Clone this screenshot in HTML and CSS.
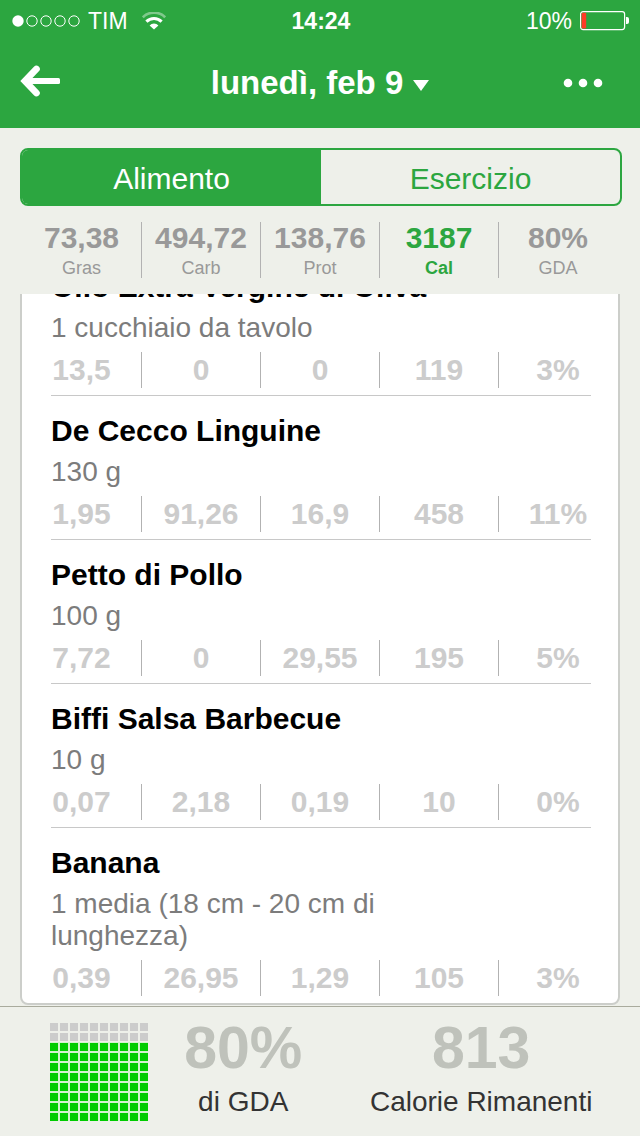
FILE: index.html
```
<!DOCTYPE html>
<html lang="it">
<head>
<meta charset="utf-8">
<meta name="viewport" content="width=device-width, initial-scale=1">
<title>Diario alimentare</title>
<link rel="stylesheet" href="styles.css">
</head>
<body>

<header class="top">
	<div class="status">
		<div class="carrier">
			<svg class="signal" width="68" height="12" viewBox="0 0 68 12">
				<circle cx="6" cy="6" r="5.7" fill="#fff"/>
				<g fill="none" stroke="#fff" stroke-width="1">
					<circle cx="20" cy="6" r="5.2"/>
					<circle cx="34" cy="6" r="5.2"/>
					<circle cx="48" cy="6" r="5.2"/>
					<circle cx="62" cy="6" r="5.2"/>
				</g>
			</svg>
			<span>TIM</span>
			<svg class="wifi" width="24" height="18" viewBox="0 0 24 18">
				<path d="M0.8 5.2 A16 16 0 0 1 23.2 5.2" fill="none" stroke="#fff" stroke-opacity=".4" stroke-width="2.6"/>
				<path d="M4.4 9.6 A10.6 10.6 0 0 1 19.6 9.6" fill="none" stroke="#fff" stroke-width="3"/>
				<path d="M12 17.6 L7.6 13.5 A6 6 0 0 1 16.4 13.5 Z" fill="#fff"/>
			</svg>
		</div>
		<b class="clock">14:24</b>
		<div class="power">
			<span>10%</span>
			<svg width="50" height="20" viewBox="0 0 50 20">
				<rect x="0.6" y="0.6" width="44" height="18" rx="2.5" fill="none" stroke="#fff" stroke-width="1.2"/>
				<rect x="1.6" y="1.8" width="4.6" height="15.6" rx="1" fill="#ff3b26"/>
				<path d="M46 6 h1 a2 2 0 0 1 2 2 v3 a2 2 0 0 1 -2 2 h-1 z" fill="#fff"/>
			</svg>
		</div>
	</div>
	<nav class="nav">
		<button class="back" type="button" aria-label="Indietro">
			<svg width="40" height="32" viewBox="0 0 40 32">
				<path d="M5 16 H38" fill="none" stroke="#fff" stroke-width="6"/>
				<path d="M36 13 h2.5 a1.5 1.5 0 0 1 1.5 1.5 v3 a1.5 1.5 0 0 1 -1.5 1.5 h-2.5 z" fill="#fff"/>
				<path d="M16.4 4 L5 16 L16.4 28" fill="none" stroke="#fff" stroke-width="6.8" stroke-linecap="round"/>
			</svg>
		</button>
		<button class="date" type="button">
			<span>lunedì, feb 9</span>
			<svg width="16" height="11" viewBox="0 0 16 11"><path d="M0 0 H16 L8 11 Z" fill="#fff"/></svg>
		</button>
		<button class="more" type="button" aria-label="Altro">
			<svg width="40" height="10" viewBox="0 0 40 10">
				<circle cx="5" cy="5" r="4.3" fill="#fff"/>
				<circle cx="20" cy="5" r="4.3" fill="#fff"/>
				<circle cx="35" cy="5" r="4.3" fill="#fff"/>
			</svg>
		</button>
	</nav>
</header>

<div class="tabs">
	<button class="tab active" type="button">Alimento</button>
	<button class="tab" type="button">Esercizio</button>
</div>

<div class="totals">
	<div class="total"><b>73,38</b><span>Gras</span></div>
	<div class="total"><b>494,72</b><span>Carb</span></div>
	<div class="total"><b>138,76</b><span>Prot</span></div>
	<div class="total selected"><b>3187</b><span>Cal</span></div>
	<div class="total"><b>80%</b><span>GDA</span></div>
</div>

<main class="diary">
	<ul class="card">
		<li class="food">
			<h2>Olio Extra Vergine di Oliva</h2>
			<p>1 cucchiaio da tavolo</p>
			<div class="amounts"><span>13,5</span><span>0</span><span>0</span><span>119</span><span>3%</span></div>
		</li>
		<li class="food">
			<h2>De Cecco Linguine</h2>
			<p>130 g</p>
			<div class="amounts"><span>1,95</span><span>91,26</span><span>16,9</span><span>458</span><span>11%</span></div>
		</li>
		<li class="food">
			<h2>Petto di Pollo</h2>
			<p>100 g</p>
			<div class="amounts"><span>7,72</span><span>0</span><span>29,55</span><span>195</span><span>5%</span></div>
		</li>
		<li class="food">
			<h2>Biffi Salsa Barbecue</h2>
			<p>10 g</p>
			<div class="amounts"><span>0,07</span><span>2,18</span><span>0,19</span><span>10</span><span>0%</span></div>
		</li>
		<li class="food">
			<h2>Banana</h2>
			<p>1 media (18 cm - 20 cm di lunghezza)</p>
			<div class="amounts"><span>0,39</span><span>26,95</span><span>1,29</span><span>105</span><span>3%</span></div>
		</li>
	</ul>
</main>

<footer class="summary">
	<!-- 10x10 squares, two rows still empty -->
	<svg width="98" height="98" viewBox="0 0 98 98">
		<defs>
			<pattern id="empty" width="10" height="10" patternUnits="userSpaceOnUse"><rect width="8" height="8" fill="#ccc"/></pattern>
			<pattern id="full" width="10" height="10" patternUnits="userSpaceOnUse"><rect width="8" height="8" fill="#00cc00"/></pattern>
		</defs>
		<rect width="98" height="18" fill="url(#empty)"/>
		<rect y="19" width="98" height="79" fill="#d3f3cf"/>
		<rect y="20" width="98" height="78" fill="url(#full)"/>
	</svg>
	<div class="figure"><b>80%</b><span>di GDA</span></div>
	<div class="figure"><b>813</b><span>Calorie Rimanenti</span></div>
</footer>

</body>
</html>
```
FILE: styles.css
```
* {
	box-sizing: border-box;
}
body {
	margin: 0;
	height: 100vh;
	display: flex;
	flex-direction: column;
	background: #eef0ea;
	font-family: "Liberation Sans", Arial, sans-serif;
	color: #333;
}
button {
	border: none;
	background: none;
	padding: 0;
	margin: 0;
	font-family: inherit;
	cursor: pointer;
}
svg {
	display: block;
}

/* green bar */
.top {
	background: #2ca640;
	color: white;
}
.status {
	display: grid;
	grid-template-columns: 1fr auto 1fr;
	align-items: center;
	height: 42px;
	padding: 0 10px 0 12px;
	font-size: 23px;
}
.carrier, .power {
	display: flex;
	align-items: center;
	gap: 8px;
}
.wifi {
	margin-left: 6px;
}
.power {
	justify-content: flex-end;
}
.clock {
	font-size: 23px;
}
.nav {
	display: grid;
	grid-template-columns: 1fr auto 1fr;
	align-items: center;
	height: 86px;
	padding: 0 20px 4px;
}
.back {
	justify-self: start;
	padding-bottom: 4px;
}
.more {
	justify-self: end;
	padding-right: 17px;
}
.date {
	display: flex;
	align-items: center;
	gap: 10px;
	font-size: 33px;
	font-weight: bold;
	color: white;
}
.date svg {
	margin-top: 4px;
}

/* tabs */
.tabs {
	display: flex;
	height: 58px;
	margin: 20px 18px 16px 20px;
	border: 2px solid #2ca640;
	border-radius: 8px;
	overflow: hidden;
	flex-shrink: 0;
}
.tab {
	flex: 1;
	padding-top: 4px;
	font-size: 30px;
	color: #2ca640;
}
.tab.active {
	background: #2ca640;
	color: white;
}

/* day totals */
.totals {
	display: grid;
	grid-template-columns: repeat(5, 1fr);
	margin: 0 23px 16px 22px;
	flex-shrink: 0;
}
.total {
	display: flex;
	flex-direction: column;
	align-items: center;
	height: 56px;
	color: #999;
}
.total + .total {
	border-left: 1px solid #b2b2b2;
}
.total b {
	font-size: 30px;
	line-height: 32px;
}
.total span {
	font-size: 18px;
	line-height: 28px;
}
.total.selected {
	color: #2ca640;
}
.total.selected span {
	font-weight: bold;
}

/* food list, scrolled to its end */
.diary {
	flex: 1;
	min-height: 0;
	display: flex;
	flex-direction: column;
	justify-content: flex-end;
	overflow: hidden;
	padding: 0 20px 1px;
}
.card {
	flex-shrink: 0;
	margin: 0;
	padding: 0;
	list-style: none;
	background: white;
	border: 2px solid #ccceca;
	border-radius: 8px;
}
.food {
	padding: 17px 0 7px;
}
.food:not(:last-child)::after {
	content: "";
	display: block;
	height: 1px;
	margin: 7px 27px -7px 29px;
	background: #c8c8c8;
}
.food h2 {
	margin: 0 29px;
	font-size: 30px;
	line-height: 36px;
	color: black;
}
.food p {
	margin: 7px 200px 8px 29px;
	font-size: 28px;
	line-height: 32px;
	color: #7c7c7c;
}
.amounts {
	display: grid;
	grid-template-columns: repeat(5, 1fr);
	padding-right: 1px;
}
.amounts span {
	text-align: center;
	font-size: 30px;
	font-weight: bold;
	line-height: 36px;
	color: #ccc;
}
.amounts span + span {
	border-left: 1px solid #b2b2b2;
}

/* bottom bar */
.summary {
	display: grid;
	grid-template-columns: 98px 2fr 3fr;
	align-items: start;
	height: 130px;
	padding: 16px 16px 0 50px;
	border-top: 1px solid #a9ab9d;
	flex-shrink: 0;
}
.figure {
	display: flex;
	flex-direction: column;
	align-items: center;
}
.figure b {
	font-size: 59px;
	line-height: 50px;
	color: #bfc2bb;
}
.figure span {
	margin-top: 13px;
	font-size: 28px;
	line-height: 32px;
}
```
